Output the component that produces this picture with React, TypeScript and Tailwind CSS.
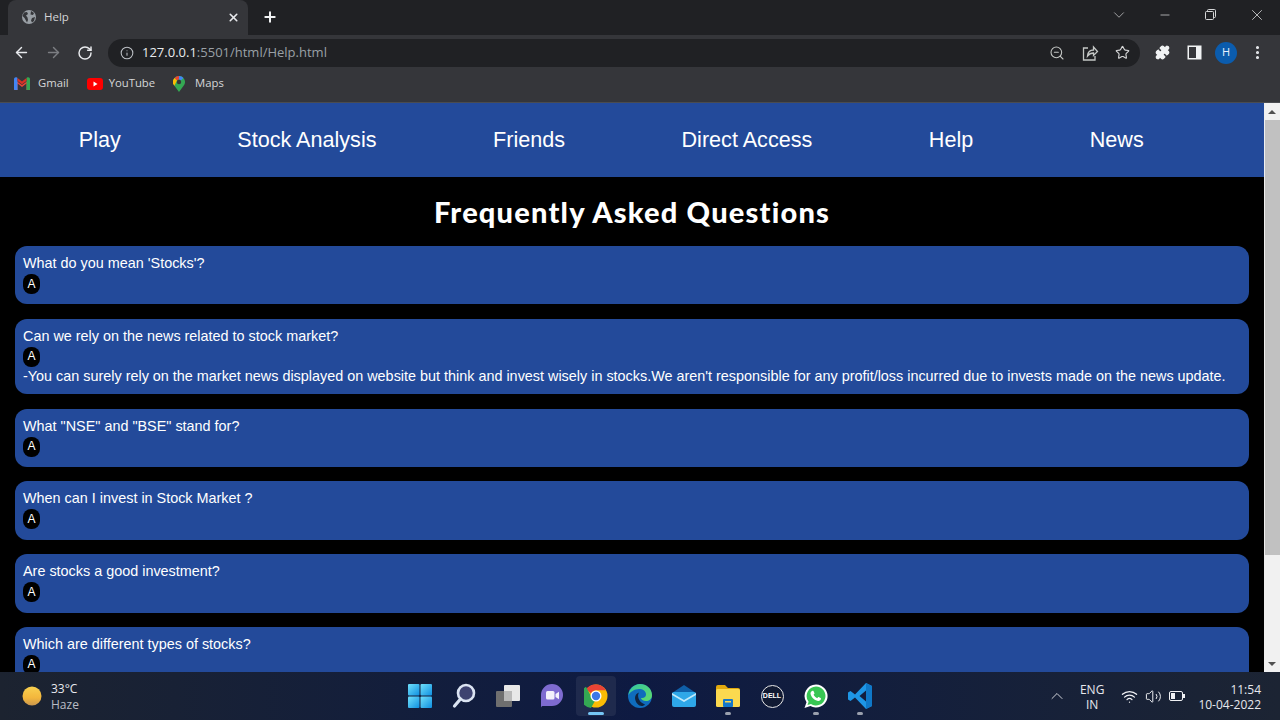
import React from "react";
import { ArrowLeft, ArrowRight, RotateCw, Info, X, Plus, ZoomOut, Star, Puzzle, EllipsisVertical, ChevronDown, ChevronUp, Minus, Wifi, Volume2 } from "lucide-react";

const Globe = () => (
  <svg width="16" height="16" viewBox="0 0 16 16">
    <circle cx="8" cy="8" r="7" fill="#9aa0a6" />
    <path d="M3 3.500 6 3l1 2-2 1.500 1.500 2L7 11l-1 2.500L3.500 9 1.500 7zM10 2l3 2-1 2-2.500-.5zM11 9l3-1-1 4-2 1.500-1-2z" fill="#35363a" />
  </svg>
);

const Gmail = () => (
  <svg width="16" height="13" viewBox="0 0 16 13">
    <path d="M0 2.200 8 8l8-5.800V13h-3.500V6.500L8 10 3.500 6.500V13H0z" fill="#ea4335" />
    <path d="M0 2.200C0 .6 1.600-.4 3 .6l.5.4V13H1a1 1 0 0 1-1-1z" fill="#4285f4" />
    <path d="M16 2.200c0-1.600-1.600-2.600-3-1.600l-.5.400V13H15a1 1 0 0 0 1-1z" fill="#34a853" />
    <path d="M12.500 1 8 4.400 3.500 1v3L8 7.300 12.500 4z" fill="#d93025" />
  </svg>
);

const YouTube = () => (
  <svg width="16" height="12" viewBox="0 0 16 12">
    <rect width="16" height="12" rx="3" fill="#f00" />
    <path d="M6.500 3.500 10.500 6l-4 2.500z" fill="#fff" />
  </svg>
);

const Maps = () => (
  <svg width="12" height="16" viewBox="0 0 12 16">
    <path d="M6 0a6 6 0 0 0-4.600 9.800L6 16l4.600-6.200A6 6 0 0 0 6 0z" fill="#34a853" />
    <path d="M6 0a6 6 0 0 1 4.500 2L7.800 4.500A2.500 2.500 0 0 0 6 3.500z" fill="#4285f4" />
    <path d="M1.500 2A6 6 0 0 1 6 0v3.500a2.500 2.500 0 0 0-2 1z" fill="#ea4335" />
    <path d="M1.500 2 4 4.500 1.400 9.800A6 6 0 0 1 1.500 2z" fill="#fbbc04" />
    <circle cx="6" cy="6" r="2.200" fill="#35363a" />
  </svg>
);

const ShareIcon = () => (
  <svg width="18" height="18" viewBox="0 0 18 18" fill="none" stroke="#c4c7c5" strokeWidth="1.300">
    <path d="M7 4H2.500v12H14v-4" />
    <path d="M6.500 12c.3-3.500 2.500-6 6-6V3l4 4.500-4 4V9c-2.500 0-4.500 1-6 3z" />
  </svg>
);

const SidePanel = () => (
  <svg width="15" height="15" viewBox="0 0 15 15">
    <rect x="0.500" y="0.500" width="14" height="14" fill="#f1f3f4" />
    <rect x="2" y="2" width="7" height="11" fill="#35363a" />
  </svg>
);

const Restore = () => (
  <svg width="11" height="11" viewBox="0 0 11 11" fill="none" stroke="#d6d7d8" strokeWidth="1">
    <rect x="0.500" y="2.500" width="8" height="8" rx="1" />
    <path d="M2.500 2.500V1.500a1 1 0 0 1 1-1h6a1 1 0 0 1 1 1v6a1 1 0 0 1-1 1h-1" />
  </svg>
);

const Sun = () => (
  <svg width="20" height="20" viewBox="0 0 20 20">
    <defs>
      <linearGradient id="sunfill" x1="0" y1="0" x2="0" y2="1">
        <stop offset="0" stopColor="#f8d04f" />
        <stop offset="0.600" stopColor="#f3b63c" />
        <stop offset="1" stopColor="#c9974f" />
      </linearGradient>
    </defs>
    <circle cx="10" cy="10" r="9.500" fill="url(#sunfill)" />
  </svg>
);

const WindowsLogo = () => (
  <svg width="24" height="24" viewBox="0 0 24 24">
    <defs>
      <linearGradient id="win" x1="0" y1="0" x2="1" y2="1">
        <stop offset="0" stopColor="#6fe0fb" />
        <stop offset="1" stopColor="#0f8fe0" />
      </linearGradient>
    </defs>
    <rect x="0" y="0" width="11.500" height="11.500" rx="1" fill="url(#win)" />
    <rect x="12.500" y="0" width="11.500" height="11.500" rx="1" fill="url(#win)" />
    <rect x="0" y="12.500" width="11.500" height="11.500" rx="1" fill="url(#win)" />
    <rect x="12.500" y="12.500" width="11.500" height="11.500" rx="1" fill="url(#win)" />
  </svg>
);

const SearchIcon = () => (
  <svg width="24" height="26" viewBox="0 0 24 26">
    <circle cx="14" cy="10" r="8" fill="#3d4270" stroke="#dbe4f2" strokeWidth="2.600" />
    <path d="M8.500 16 2.500 23" stroke="#dbe4f2" strokeWidth="3.200" strokeLinecap="round" />
  </svg>
);

const TaskView = () => (
  <svg width="24" height="22" viewBox="0 0 24 22">
    <rect x="8" y="0" width="16" height="16" rx="1" fill="#e8e8e8" />
    <rect x="0" y="6" width="16" height="16" rx="1" fill="#6f6f6f" />
    <rect x="8" y="6" width="8" height="10" fill="#b9b9b9" />
  </svg>
);

const Teams = () => (
  <svg width="24" height="26" viewBox="0 0 24 26">
    <path d="M12 1a11 11 0 0 1 0 22H2.500c-1 0-1.500 1-1.500 2V12A11 11 0 0 1 12 1z" fill="#7e6bd0" />
    <rect x="6" y="8" width="8.500" height="8.500" rx="1.500" fill="#f3f1fb" />
    <path d="m15.500 11 3.500-2.200v7.400L15.500 14z" fill="#f3f1fb" />
  </svg>
);

const Chrome = () => (
  <svg width="24" height="24" viewBox="0 0 24 24">
    <circle cx="12" cy="12" r="11.500" fill="#fbbc04" />
    <path d="M12 .5a11.500 11.500 0 0 1 10 5.750H12a5.750 5.750 0 0 0-5 2.900L2 5.300A11.500 11.500 0 0 1 12 .5z" fill="#ea4335" />
    <path d="M2 5.300 7 14.800l-.1.1a5.750 5.750 0 0 0 5 2.900l-4.900 8.600A11.500 11.500 0 0 1 2 5.300z" transform="translate(0 -2.500)" fill="#34a853" />
    <circle cx="12" cy="12" r="5.500" fill="#fff" />
    <circle cx="12" cy="12" r="4.200" fill="#3b78e7" />
  </svg>
);

const Edge = () => (
  <svg width="24" height="24" viewBox="0 0 24 24">
    <defs>
      <linearGradient id="edgeg" x1="0" y1="0" x2="1" y2="1">
        <stop offset="0" stopColor="#36c5a0" />
        <stop offset="1" stopColor="#5fdc6a" />
      </linearGradient>
    </defs>
    <circle cx="12" cy="12" r="12" fill="#0f6cbd" />
    <path d="M12 0c6.600 0 12 4.800 12 11 0 4-3 6-6 6-3 0-5-1.500-5-3 3 .5 5-1 5-3.500C18 7 15 5 11 5 6.500 5 2 8 .5 11 1 5 6 0 12 0z" fill="url(#edgeg)" />
    <path d="M7 14c0-3 2-5 4-5.500C9 11 10 18 17 20.500 14 24 7.500 21 7 14z" fill="#10233f" />
  </svg>
);

const Mail = () => (
  <svg width="24" height="22" viewBox="0 0 24 22">
    <path d="M12 0 24 8v3H0V8z" fill="#0f5fa8" />
    <rect x="0" y="7" width="24" height="15" rx="2" fill="#2ea7e8" />
    <path d="m0 8 12 7 12-7v2l-12 7-12-7z" fill="#bfe9fb" />
  </svg>
);

const Folder = () => (
  <svg width="24" height="22" viewBox="0 0 24 22">
    <path d="M0 2a2 2 0 0 1 2-2h7l3 3h10a2 2 0 0 1 2 2v3H0z" fill="#e2a90e" />
    <rect x="0" y="4" width="24" height="18" rx="1.500" fill="#fbd94f" />
    <rect x="7" y="14" width="10" height="8" rx="1" fill="#1577c9" />
    <rect x="9" y="16" width="6" height="1.500" fill="#fbd94f" />
  </svg>
);

const Whatsapp = () => (
  <svg width="24" height="25" viewBox="0 0 24 25">
    <path d="M12 0.500a11.500 11.500 0 1 1-5.600 21.500L0.500 24l2-5.700A11.500 11.500 0 0 1 12 .5z" fill="#fff" />
    <path d="M12 2.500a9.500 9.500 0 1 1-5 17.600l-3.500 1 1.100-3.400A9.500 9.500 0 0 1 12 2.500z" fill="#38c653" />
    <path d="M8.500 6.800c.5 0 1 0 1.200.6l.8 1.900c.1.400-.5 1-.9 1.500.8 1.500 2 2.600 3.600 3.400.5-.5 1-1.200 1.400-1.100l2 1c.5.300.4.800.2 1.400-.4 1-1.600 1.600-2.800 1.400-3.800-.6-7-3.700-7.500-7.300-.1-1.200.7-2.200 2-2.800z" fill="#fff" />
  </svg>
);

const VSCode = () => (
  <svg width="24" height="26" viewBox="0 0 24 26">
    <path d="M18 0 24 3v20l-6 3L7 14.500 2.500 18 0 16.500v-7L2.500 8 7 11.500zM18 7.500 11.500 13 18 18.500z" fill="#1e96e6" />
    <path d="M18 0 24 3v20l-6 3z" fill="#0f78c8" />
  </svg>
);

const Nav = ["Play", "Stock Analysis", "Friends", "Direct Access", "Help", "News"];

const Faq: { q: string; a?: string }[] = [
  { q: "What do you mean 'Stocks'?" },
  {
    q: "Can we rely on the news related to stock market?",
    a: "-You can surely rely on the market news displayed on website but think and invest wisely in stocks.We aren't responsible for any profit/loss incurred due to invests made on the news update.",
  },
  { q: 'What "NSE" and "BSE" stand for?' },
  { q: "When can I invest in Stock Market ?" },
  { q: "Are stocks a good investment?" },
  { q: "Which are different types of stocks?" },
];

const TaskItem = ({ children, active, dot }: { children: React.ReactNode; active?: boolean; dot?: boolean }) => (
  <div className={`relative mx-[2px] flex h-[40px] w-[40px] items-center justify-center rounded ${active ? "bg-[#1f2a4d]" : ""}`}>
    {children}
    {active && <div className="absolute bottom-[1px] left-[12px] h-[3px] w-[16px] rounded-full bg-[#75c5f5]" />}
    {dot && <div className="absolute bottom-[1px] left-[17px] h-[3px] w-[6px] rounded-full bg-[#9aa0ad]" />}
  </div>
);

export default function App() {
  return (
    <div className="flex h-screen w-full flex-col overflow-hidden bg-black font-['Liberation_Sans',Arial,sans-serif]">
      {/* Tab strip */}
      <div className="flex h-[35px] shrink-0 items-end bg-[#202124] pl-[8px] text-[#d6d7d8]">
        <div className="flex h-[35px] w-[240px] items-center rounded-t-lg bg-[#35363a] pb-[1px] pl-[13px] pr-[8px]">
          <Globe />
          <span className="ml-[7px] flex-1 font-['Open_Sans',sans-serif] text-[11.5px] text-[#d4d5d7]">Help</span>
          <X size={13} strokeWidth={3} color="#e8eaed" />
        </div>
        <div className="ml-[14px] flex h-[35px] items-center pb-[1px]">
          <Plus size={16} strokeWidth={3} color="#f1f3f4" />
        </div>
        <div className="flex h-[29px] flex-1 items-center justify-end self-start">
          <ChevronDown size={18} strokeWidth={1} color="#c8c9cb" className="mr-[30px]" />
          <Minus size={14} strokeWidth={1.2} color="#e2e3e4" className="mr-[33px]" />
          <Restore />
          <div className="ml-[32px] mr-[14px]">
            <X size={18} strokeWidth={1} color="#e6e7e8" />
          </div>
        </div>
      </div>

      {/* Toolbar */}
      <div className="flex h-[35px] shrink-0 items-center bg-[#35363a] pl-[13px] pr-[14px]">
        <ArrowLeft size={17} strokeWidth={2} color="#e8eaed" />
        <ArrowRight size={17} strokeWidth={2} color="#7c7e82" className="ml-[15px]" />
        <RotateCw size={16} strokeWidth={2.2} color="#e8eaed" className="ml-[15px]" />
        <div className="ml-[15px] flex h-[28px] w-[1032px] items-center rounded-full bg-[#202124] pl-[12px] pr-[10px]">
          <Info size={14} strokeWidth={1.8} color="#bdc1c6" />
          <span className="ml-[8px] flex-1 font-['Open_Sans',sans-serif] text-[13px] text-[#9aa0a6]">
            <span className="text-[#e8eaed]">127.0.0.1</span>:5501/html/Help.html
          </span>
          <ZoomOut size={16} strokeWidth={1.6} color="#c4c7c5" />
          <div className="ml-[16px]">
            <ShareIcon />
          </div>
          <Star size={15} strokeWidth={1.8} color="#d5d6d7" className="ml-[16px]" />
        </div>
        <Puzzle size={15} strokeWidth={2} color="#f1f3f4" fill="#f1f3f4" className="ml-[15px]" />
        <div className="ml-[17px]">
          <SidePanel />
        </div>
        <div className="ml-[13px] flex h-[22px] w-[22px] items-center justify-center rounded-full bg-[#0b5cad] font-['Open_Sans',sans-serif] text-[11px] text-[#e8f0fe]">
          H
        </div>
        <EllipsisVertical size={17} strokeWidth={2.4} color="#e8eaed" className="ml-[12px]" />
      </div>

      {/* Bookmarks */}
      <div className="flex h-[33px] shrink-0 items-center border-b border-b-[#4a4c50] bg-[#35363a] pb-[5px] pl-[14px] font-['Open_Sans',sans-serif] text-[11.3px] text-[#d6d7d8]">
        <Gmail />
        <span className="ml-[8px]">Gmail</span>
        <div className="ml-[18px]">
          <YouTube />
        </div>
        <span className="ml-[6px]">YouTube</span>
        <div className="ml-[18px]">
          <Maps />
        </div>
        <span className="ml-[10px]">Maps</span>
      </div>

      {/* Page */}
      <div className="flex min-h-0 flex-1">
        <div className="min-w-0 flex-1 overflow-hidden bg-black">
          <nav className="flex h-[74px] items-center justify-around bg-[#234a9a] pl-[20.5px] pr-[62px]">
            {Nav.map((n) => (
              <span key={n} className="text-[21.6px] text-white">
                {n}
              </span>
            ))}
          </nav>
          <h1 className="mt-[15px] text-center font-['Lato',sans-serif] text-[29px] leading-[40px] font-black tracking-[1.2px] text-white">
            Frequently Asked Questions
          </h1>
          <div className="mx-[15px] mt-[14px] flex flex-col gap-[14.4px]">
            {Faq.map((f) => (
              <div key={f.q} className="rounded-[12px] bg-[#234a9a] pl-[8px] pr-[8px] pt-[9px] pb-[10.4px] text-[14.4px] leading-[17px] text-white">
                <p>{f.q}</p>
                <div className="mt-[2px] flex h-[20px] w-[17px] items-center justify-center rounded-[8px] bg-black text-[12px]">A</div>
                {f.a && <p className="mt-[1px] -mb-[1px]">{f.a}</p>}
              </div>
            ))}
          </div>
        </div>
        {/* Scrollbar */}
        <div className="flex w-[16px] shrink-0 flex-col items-center bg-[#f1f1f1]">
          <div className="flex h-[17px] items-center justify-center">
            <div className="h-0 w-0 border-x-[4px] border-b-[4px] border-x-transparent border-b-[#505050]" />
          </div>
          <div className="h-[435px] w-[15px] bg-[#c1c1c1]" />
          <div className="flex-1" />
          <div className="flex h-[17px] items-center justify-center">
            <div className="h-0 w-0 border-x-[4px] border-t-[4px] border-x-transparent border-t-[#505050]" />
          </div>
        </div>
      </div>

      {/* Taskbar */}
      <div className="flex h-[48px] shrink-0 items-center bg-gradient-to-r from-[#1c2330] via-[#0e1a42] to-[#1c2433] font-['Open_Sans',sans-serif] text-[12px] text-[#e6e8ee]">
        <div className="flex w-[398px] shrink-0 items-center pl-[22px]">
          <Sun />
          <div className="ml-[9px] pt-[1px] leading-[16px]">
            <div>33°C</div>
            <div className="text-[#b9bcc4]">Haze</div>
          </div>
        </div>
        <div className="flex items-center">
          <TaskItem>
            <WindowsLogo />
          </TaskItem>
          <TaskItem>
            <SearchIcon />
          </TaskItem>
          <TaskItem>
            <TaskView />
          </TaskItem>
          <TaskItem>
            <Teams />
          </TaskItem>
          <TaskItem active>
            <Chrome />
          </TaskItem>
          <TaskItem>
            <Edge />
          </TaskItem>
          <TaskItem>
            <Mail />
          </TaskItem>
          <TaskItem dot>
            <Folder />
          </TaskItem>
          <TaskItem>
            <div className="flex h-[23px] w-[23px] items-center justify-center rounded-full border-[1.500px] border-[#e8e8e8] bg-[#111a33] font-['Liberation_Sans',sans-serif] text-[7px] font-bold text-white">
              DELL
            </div>
          </TaskItem>
          <TaskItem dot>
            <Whatsapp />
          </TaskItem>
          <TaskItem dot>
            <VSCode />
          </TaskItem>
        </div>
        <div className="flex flex-1 items-center justify-end pr-[19px]">
          <ChevronUp size={20} strokeWidth={1.2} color="#d0d3da" />
          <div className="ml-[13px] pt-[1px] text-center leading-[15px]">
            <div>ENG</div>
            <div>IN</div>
          </div>
          <Wifi size={17} strokeWidth={1.8} color="#f0f1f4" className="ml-[17px]" />
          <Volume2 size={17} strokeWidth={1.4} color="#f0f1f4" className="ml-[7px]" />
          <div className="ml-[7px] flex items-center">
            <div className="flex h-[10px] w-[14px] items-center rounded-[2px] border border-[#f0f1f4] pl-[1px]">
              <div className="h-[6px] w-[4px] bg-[#f0f1f4]" />
            </div>
            <div className="h-[4px] w-[2px] bg-[#f0f1f4]" />
          </div>
          <div className="ml-[13px] pt-[1px] text-right leading-[15px]">
            <div>11:54</div>
            <div>10-04-2022</div>
          </div>
        </div>
      </div>
    </div>
  );
}
